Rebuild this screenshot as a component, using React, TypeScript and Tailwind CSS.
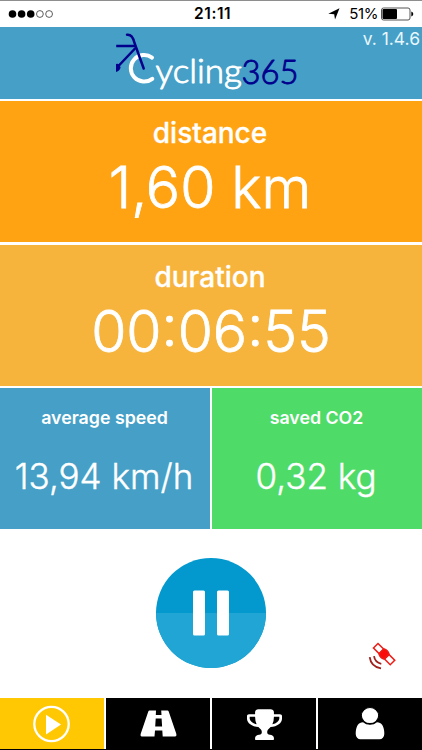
import { clsx } from "clsx";

const stats = [
  { label: "distance", value: "1,60 km", className: "mb-[3px] bg-[#ffa312]", valueClass: "pr-[2px]" },
  { label: "duration", value: "00:06:55", className: "mb-[2px] bg-[#f7b43d]", valueClass: "" },
];

const smallStats = [
  { label: "average speed", value: "13,94 km/h", bg: "bg-[#459fc6]" },
  { label: "saved CO2", value: "0,32 kg", bg: "bg-[#4fdb68]" },
];

function StatusBar() {
  return (
    <div className="relative flex h-[27px] items-center justify-between border-t border-[#8e8e8e] bg-white pr-2 pl-2 text-black">
      <svg width="46" height="10" viewBox="0 0 46 10">
        <circle cx="4.5" cy="5" r="3.8" />
        <circle cx="13.6" cy="5" r="3.8" />
        <circle cx="22.7" cy="5" r="3.8" />
        <circle cx="31.9" cy="5" r="3.4" fill="none" stroke="#333" strokeWidth="0.8" />
        <circle cx="41.1" cy="5" r="3.4" fill="none" stroke="#333" strokeWidth="0.8" />
      </svg>
      <span className="absolute left-[194px] text-[15.5px] font-semibold tracking-[0.6px]">21:11</span>
      <div className="flex items-center">
        <svg className="mr-[9px]" width="12" height="12" viewBox="0 0 12 12">
          <path d="M11.5 0.3 7 11.5 6.2 6.2 0.3 5.8z" />
        </svg>
        <span className="mr-[3px] text-[15px] tracking-[-0.4px]">51%</span>
        <svg width="33" height="14" viewBox="0 0 33 14">
          <rect x="0.5" y="1" width="28.5" height="12" rx="2" fill="none" stroke="#555" />
          <rect x="1.5" y="2" width="14.5" height="10" rx="1" />
          <path d="M30.3 4.5q2 .6 2 2.5t-2 2.5z" />
        </svg>
      </div>
    </div>
  );
}

function Logo() {
  return (
    <svg className="h-[66px] w-[190px]" viewBox="116 30 190 66">
      <path
        d="M152 57.6A13.3 13.3 0 1 0 152.3 78.8"
        fill="none"
        stroke="#fff"
        strokeWidth="4"
        strokeLinecap="round"
      />
      <g fontFamily="Lato, sans-serif" fontSize="32.5" fontWeight="300" strokeWidth="0.9" strokeLinejoin="round">
        <text x="155.5" y="83" fill="#fff" stroke="#fff" textLength="86.5" lengthAdjust="spacingAndGlyphs">ycling</text>
        <text x="241.5" y="83.5" fill="#00008c" stroke="#00008c" textLength="57" lengthAdjust="spacingAndGlyphs">365</text>
      </g>
      <g fill="none" stroke="#00008c" strokeWidth="2.5" strokeLinecap="round">
        <path d="M127 34.7Q132.500 34 134.500 43L143.700 68.500" />
        <path d="M116.200 46H136" strokeLinecap="butt" />
        <path d="M135 48.500 118 66.500" />
      </g>
      <path d="M116 64Q119.500 63 120.500 67.500Q120 70.500 116 72z" fill="#00008c" />
    </svg>
  );
}

function PauseButton() {
  return (
    <button className="block size-[110px]">
      <svg width="110" height="110" viewBox="0 0 110 110">
        <circle cx="55" cy="55" r="55" fill="#0399ce" />
        <path d="M0 55a55 55 0 0 0 110 0z" fill="#21a5d4" />
        <rect x="37" y="32.5" width="12" height="45" rx="1.5" fill="#fff" />
        <rect x="61" y="32.5" width="12" height="45" rx="1.5" fill="#fff" />
      </svg>
    </button>
  );
}

function Satellite() {
  return (
    <svg width="30" height="30" viewBox="0 0 30 30" fill="none">
      <g transform="translate(17 12) rotate(45)" stroke="#ed1c16" strokeWidth="1.5">
        <rect x="-11.7" y="-3.2" width="8" height="6.4" />
        <rect x="4" y="-3.2" width="8" height="6.4" />
        <path d="M-3.500-3.500Q0-5.500 3.500-3.500V3.500Q0 5.500-3.500 3.500z" fill="#fa0c08" />
      </g>
      <g stroke="#a0201c" strokeWidth="1.800">
        <path d="M7 14.200Q8 20.500 14.300 21.800" />
        <path d="M2.700 15.200Q4 25 14 26.300" />
      </g>
    </svg>
  );
}

function PlayIcon() {
  return (
    <svg width="38" height="38" viewBox="0 0 38 38">
      <circle cx="18.5" cy="19" r="17.2" fill="none" stroke="#fff" strokeWidth="2.3" />
      <path d="M13 9.7 28 19.5 13 29.500z" fill="#fff" />
    </svg>
  );
}

function RoadIcon() {
  return (
    <svg width="37" height="27" viewBox="0 0 37 27" fill="#fff">
      <path d="M9.5.5H16L15.8 5H21.5L21.2.5H27.5Q28.3.5 28.7 1.5L36.2 23.5Q37 26.5 35 26.5H22.7L22.3 20.5H15L14.5 26.5H1.8Q0 26.5.8 23.5L8.3 1.5Q8.7.5 9.5.5zM15.7 8.5 15.2 16.5H22.1L21.6 8.5z" fillRule="evenodd" />
    </svg>
  );
}

function TrophyIcon() {
  return (
    <svg width="35" height="36" viewBox="64 0 1664 1792" preserveAspectRatio="none" fill="#fff">
      <path d="M458 930q-74-162-74-370h-256v96q0 78 94.5 162t235.5 112zm1078-274v-96h-256q0 208-74 370 141-28 235.5-112t94.5-162zm128-128v128q0 71-41.5 143t-112 130-173 97.5-215.5 44.5q-42 54-95 95-38 34-52.5 72.5t-14.5 89.5q0 54 30.5 91t97.5 37q75 0 133.5 45.5t58.5 114.5v64q0 14-9 23t-23 9h-832q-14 0-23-9t-9-23v-64q0-69 58.5-114.5t133.5-45.5q67 0 97.5-37t30.5-91q0-51-14.5-89.5t-52.5-72.5q-53-41-95-95-113-5-215.5-44.5t-173-97.5-112-130-41.5-143v-128q0-40 28-68t68-28h288v-96q0-66 47-113t113-47h576q66 0 113 47t47 113v96h288q40 0 68 28t28 68z" transform="translate(64 -20)" />
    </svg>
  );
}

function UserIcon() {
  return (
    <svg width="40" height="37" viewBox="0 0 1792 1792" preserveAspectRatio="none" fill="#fff" stroke="#000">
      <path
        d="M1536 1399q0 109-62.5 187t-150.5 78h-854q-88 0-150.5-78t-62.5-187q0-85 8.5-160.5t31.5-152 58.5-131 94-89 134.5-34.5q131 128 313 128t313-128q76 0 134.5 34.5t94 89 58.5 131 31.5 152 8.5 160.5z"
        strokeWidth="0"
      />
      <circle cx="896" cy="512" r="390" strokeWidth="50" />
    </svg>
  );
}

const tabs = [
  { name: "ride", icon: PlayIcon },
  { name: "routes", icon: RoadIcon },
  { name: "awards", icon: TrophyIcon },
  { name: "profile", icon: UserIcon },
];

export default function App() {
  return (
    <div className="flex h-[750px] w-[422px] flex-col overflow-hidden bg-white font-['Inter',sans-serif] text-white">
      <StatusBar />
      <header className="relative flex h-[72px] justify-center bg-[#459fc6] pt-[3px]">
        <Logo />
        <span className="absolute top-0 right-[2px] text-[17.5px] leading-6 text-[#e8f7ff]">v. 1.4.6</span>
      </header>

      <main className="mt-[2px] flex flex-1 flex-col">
        {stats.map((stat) => (
          <section key={stat.label} className={clsx("flex h-[141px] flex-col items-center", stat.className)}>
            <h2 className="mt-[14px] pr-[2px] text-[28px] leading-9 font-medium [-webkit-text-stroke:0.3px_white]">{stat.label}</h2>
            <p className={clsx("mt-[2px] text-[57px] leading-[70px] font-light [-webkit-text-stroke:0.8px_white]", stat.valueClass)}>
              {stat.value}
            </p>
          </section>
        ))}
        <div className="grid h-[141px] grid-cols-2 gap-[2px]">
          {smallStats.map((stat) => (
            <section key={stat.label} className={clsx("flex flex-col items-center", stat.bg)}>
              <h2 className="mt-[18px] pr-px text-[17.8px] leading-6 font-semibold">{stat.label}</h2>
              <p className="mt-[24px] pr-[2px] text-[35px] leading-[44px] font-light [-webkit-text-stroke:0.4px_white]">{stat.value}</p>
            </section>
          ))}
        </div>
        <div className="relative flex flex-1 justify-center pt-[29px]">
          <PauseButton />
          <div className="absolute top-[113px] left-[367px]">
            <Satellite />
          </div>
        </div>
      </main>

      <nav className="grid h-[52px] grid-cols-4 gap-[2px] border-b border-black">
        {tabs.map(({ name, icon: Icon }, i) => (
          <button key={name} className={clsx("flex items-center justify-center", i === 0 ? "bg-[#ffc803]" : "bg-black")}>
            <Icon />
          </button>
        ))}
      </nav>
    </div>
  );
}
